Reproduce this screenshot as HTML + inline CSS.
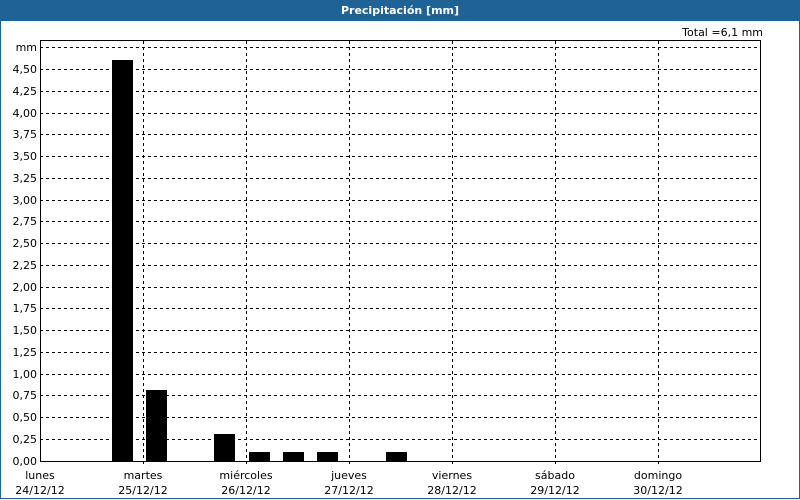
<!DOCTYPE html>
<html><head><meta charset="utf-8"><style>
html,body{margin:0;padding:0;background:#fff}
body{width:800px;height:500px;overflow:hidden;position:relative}
.frame{position:absolute;left:0;top:0;width:798px;height:498px;border:1px solid #1e6296;border-top:none}
.hdr{position:absolute;left:0;top:0;width:800px;height:21px;background:#1e6296;color:#fff;font:bold 11px "DejaVu Sans",sans-serif;text-align:center;line-height:21px}
svg{position:absolute;left:0;top:0}
text{font-family:"DejaVu Sans","Liberation Sans",sans-serif;font-size:11px;fill:#000}
</style></head><body>
<div class="frame"></div>
<div class="hdr">Precipitación [mm]</div>
<svg width="800" height="500">
<g stroke="#000" stroke-width="1" stroke-dasharray="3,3" shape-rendering="crispEdges">
<line x1="40" x2="760" y1="47.5" y2="47.5"/>
<line x1="40" x2="760" y1="69.5" y2="69.5"/>
<line x1="40" x2="760" y1="91.5" y2="91.5"/>
<line x1="40" x2="760" y1="113.5" y2="113.5"/>
<line x1="40" x2="760" y1="134.5" y2="134.5"/>
<line x1="40" x2="760" y1="156.5" y2="156.5"/>
<line x1="40" x2="760" y1="178.5" y2="178.5"/>
<line x1="40" x2="760" y1="200.5" y2="200.5"/>
<line x1="40" x2="760" y1="221.5" y2="221.5"/>
<line x1="40" x2="760" y1="243.5" y2="243.5"/>
<line x1="40" x2="760" y1="265.5" y2="265.5"/>
<line x1="40" x2="760" y1="287.5" y2="287.5"/>
<line x1="40" x2="760" y1="308.5" y2="308.5"/>
<line x1="40" x2="760" y1="330.5" y2="330.5"/>
<line x1="40" x2="760" y1="352.5" y2="352.5"/>
<line x1="40" x2="760" y1="374.5" y2="374.5"/>
<line x1="40" x2="760" y1="395.5" y2="395.5"/>
<line x1="40" x2="760" y1="417.5" y2="417.5"/>
<line x1="40" x2="760" y1="439.5" y2="439.5"/>
<line x1="143.5" x2="143.5" y1="41" y2="466"/>
<line x1="246.5" x2="246.5" y1="41" y2="466"/>
<line x1="349.5" x2="349.5" y1="41" y2="466"/>
<line x1="452.5" x2="452.5" y1="41" y2="466"/>
<line x1="555.5" x2="555.5" y1="41" y2="466"/>
<line x1="658.5" x2="658.5" y1="41" y2="466"/>
</g>
<rect x="40.5" y="40.5" width="720" height="421" fill="none" stroke="#000" shape-rendering="crispEdges"/>
<g fill="#000">
<rect x="112" y="60" width="21" height="401"/>
<rect x="146" y="390" width="21" height="71"/>
<rect x="214" y="434" width="21" height="27"/>
<rect x="249" y="452" width="21" height="9"/>
<rect x="283" y="452" width="21" height="9"/>
<rect x="317" y="452" width="21" height="9"/>
<rect x="386" y="452" width="21" height="9"/>
</g>
<g text-anchor="end">
<text x="37" y="51">mm</text>
<text x="37" y="73">4,50</text>
<text x="37" y="95">4,25</text>
<text x="37" y="117">4,00</text>
<text x="37" y="138">3,75</text>
<text x="37" y="160">3,50</text>
<text x="37" y="182">3,25</text>
<text x="37" y="204">3,00</text>
<text x="37" y="225">2,75</text>
<text x="37" y="247">2,50</text>
<text x="37" y="269">2,25</text>
<text x="37" y="291">2,00</text>
<text x="37" y="312">1,75</text>
<text x="37" y="334">1,50</text>
<text x="37" y="356">1,25</text>
<text x="37" y="378">1,00</text>
<text x="37" y="399">0,75</text>
<text x="37" y="421">0,50</text>
<text x="37" y="443">0,25</text>
<text x="37" y="465">0,00</text>
<text x="763" y="36">Total =6,1 mm</text>
</g>
<g text-anchor="middle">
<text x="40" y="479">lunes</text><text x="40" y="494">24/12/12</text>
<text x="143" y="479">martes</text><text x="143" y="494">25/12/12</text>
<text x="246" y="479">miércoles</text><text x="246" y="494">26/12/12</text>
<text x="349" y="479">jueves</text><text x="349" y="494">27/12/12</text>
<text x="452" y="479">viernes</text><text x="452" y="494">28/12/12</text>
<text x="555" y="479">sábado</text><text x="555" y="494">29/12/12</text>
<text x="658" y="479">domingo</text><text x="658" y="494">30/12/12</text>
</g>
</svg>
</body></html>
